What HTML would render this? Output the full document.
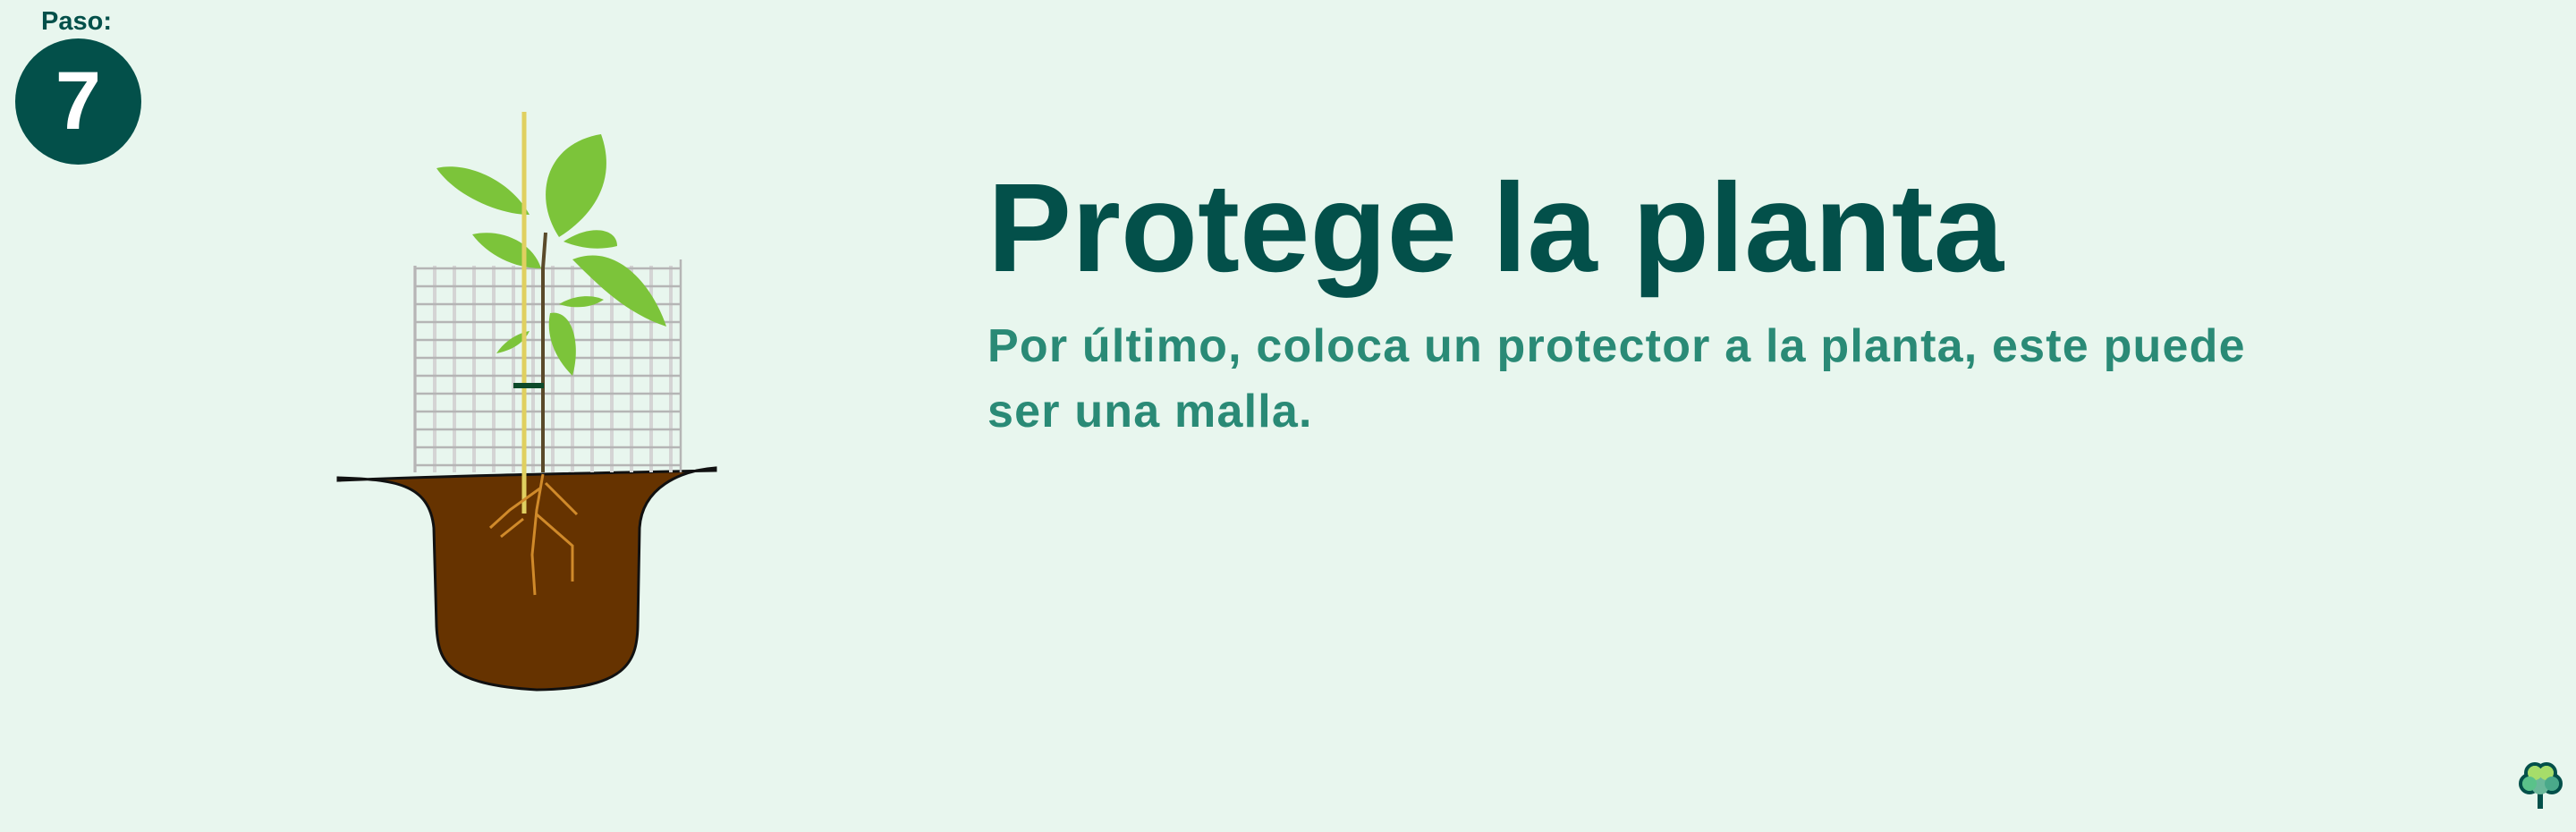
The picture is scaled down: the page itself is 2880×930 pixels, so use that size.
<!DOCTYPE html>
<html><head><meta charset="utf-8"><style>
html,body{margin:0;padding:0}
body{width:2880px;height:930px;background:#e8f6ee;position:relative;overflow:hidden;font-family:"Liberation Sans",sans-serif}
.paso{position:absolute;left:46px;top:8px;font-size:29px;font-weight:bold;color:#03504a}
.circ{position:absolute;left:17px;top:43px;width:141px;height:141px;border-radius:50%;background:#03504a;color:#fff;font-weight:bold;font-size:92px;text-align:center;line-height:141px}
h1{position:absolute;left:1104px;top:174px;margin:0;font-size:141px;font-weight:bold;color:#03504a;white-space:nowrap;line-height:160px}
p{position:absolute;left:1104px;top:351px;margin:0;font-size:52px;font-weight:bold;color:#2a8a76;line-height:73px;letter-spacing:1.2px;white-space:nowrap}
</style></head><body>
<div class="paso">Paso:</div>
<div class="circ">7</div>
<svg style="position:absolute;left:0;top:0" width="900" height="930">
 <path d="M378 534 C440 536 480 540 485 590 L488 700 C490 740 500 765 600 771 C700 770 712 740 713 700 L715 590 C718 545 760 526 800 523 L800 526 C600 530 500 532 378 537 Z" fill="#663300" stroke="#111" stroke-width="3"/>
 <g stroke="#d4d4d4" stroke-width="4" fill="none">
  <path d="M464 297V528M486 297V528M508 297V528M530 297V528M552 297V528M574 297V528M596 297V528M618 297V528M640 297V528M662 297V528M684 297V528M706 297V528M728 297V528M750 297V528"/>
 </g>
 <g stroke="#b5b5b5" stroke-width="2.5" fill="none">
  <path d="M464 300H761M464 320H761M464 340H761M464 360H761M464 380H761M464 400H761M464 420H761M464 440H761M464 460H761M464 480H761M464 500H761M464 520H761M464 297V528M761 290V528"/>
 </g>
 <path d="M607 528 L607 300 L610 260" stroke="#5a4a2a" stroke-width="4" fill="none"/>
 <g fill="#7cc43a">
  <path d="M488 188 C520 180 570 200 592 240 C560 240 510 220 488 188Z"/>
  <path d="M625 265 C595 220 610 160 672 150 C690 200 665 240 625 265Z"/>
  <path d="M528 262 C560 255 595 270 605 300 C575 300 545 285 528 262Z"/>
  <path d="M630 270 C660 250 690 255 690 275 C670 280 650 278 630 270Z"/>
  <path d="M640 290 C690 270 730 320 745 365 C700 350 670 320 640 290Z"/>
  <path d="M615 350 C640 345 650 385 640 420 C620 400 610 375 615 350Z"/>
  <path d="M625 340 C645 328 665 330 675 335 C660 345 640 345 625 340Z"/>
  <path d="M555 395 C565 380 580 372 592 370 C585 385 570 392 555 395Z"/>
 </g>
 <line x1="586" y1="125" x2="586" y2="574" stroke="#e0d060" stroke-width="5"/>
 <rect x="574" y="428" width="34" height="6" fill="#0d4a2a"/>
 <g stroke="#d08a2a" stroke-width="3" fill="none">
  <path d="M607 530 L600 570 L595 620 L598 665M605 545 L570 570 L548 590M600 575 L640 610 L640 650M610 540 L645 575M585 580 L560 600"/>
 </g>
</svg>
<h1>Protege la planta</h1>
<p>Por último, coloca un protector a la planta, este puede<br>ser una malla.</p>
<svg style="position:absolute;left:2816px;top:850px" width="52" height="56">
 <path d="M24 34V54" stroke="#03504a" stroke-width="6"/>
 <circle cx="18" cy="14" r="10" fill="#a6dd6a" stroke="#03504a" stroke-width="4"/>
 <circle cx="31" cy="14" r="10" fill="#a6dd6a" stroke="#03504a" stroke-width="4"/>
 <circle cx="12" cy="26" r="10" fill="#5ac28a" stroke="#03504a" stroke-width="4"/>
 <circle cx="37" cy="26" r="10" fill="#4aa98a" stroke="#03504a" stroke-width="4"/>
 <circle cx="24" cy="28" r="10" fill="#6ab89a"/>
 <circle cx="18" cy="14" r="8" fill="#a6dd6a"/><circle cx="31" cy="14" r="8" fill="#a6dd6a"/>
 <circle cx="12" cy="26" r="8" fill="#5ac28a"/><circle cx="37" cy="26" r="8" fill="#4aa98a"/>
</svg>
</body></html>
